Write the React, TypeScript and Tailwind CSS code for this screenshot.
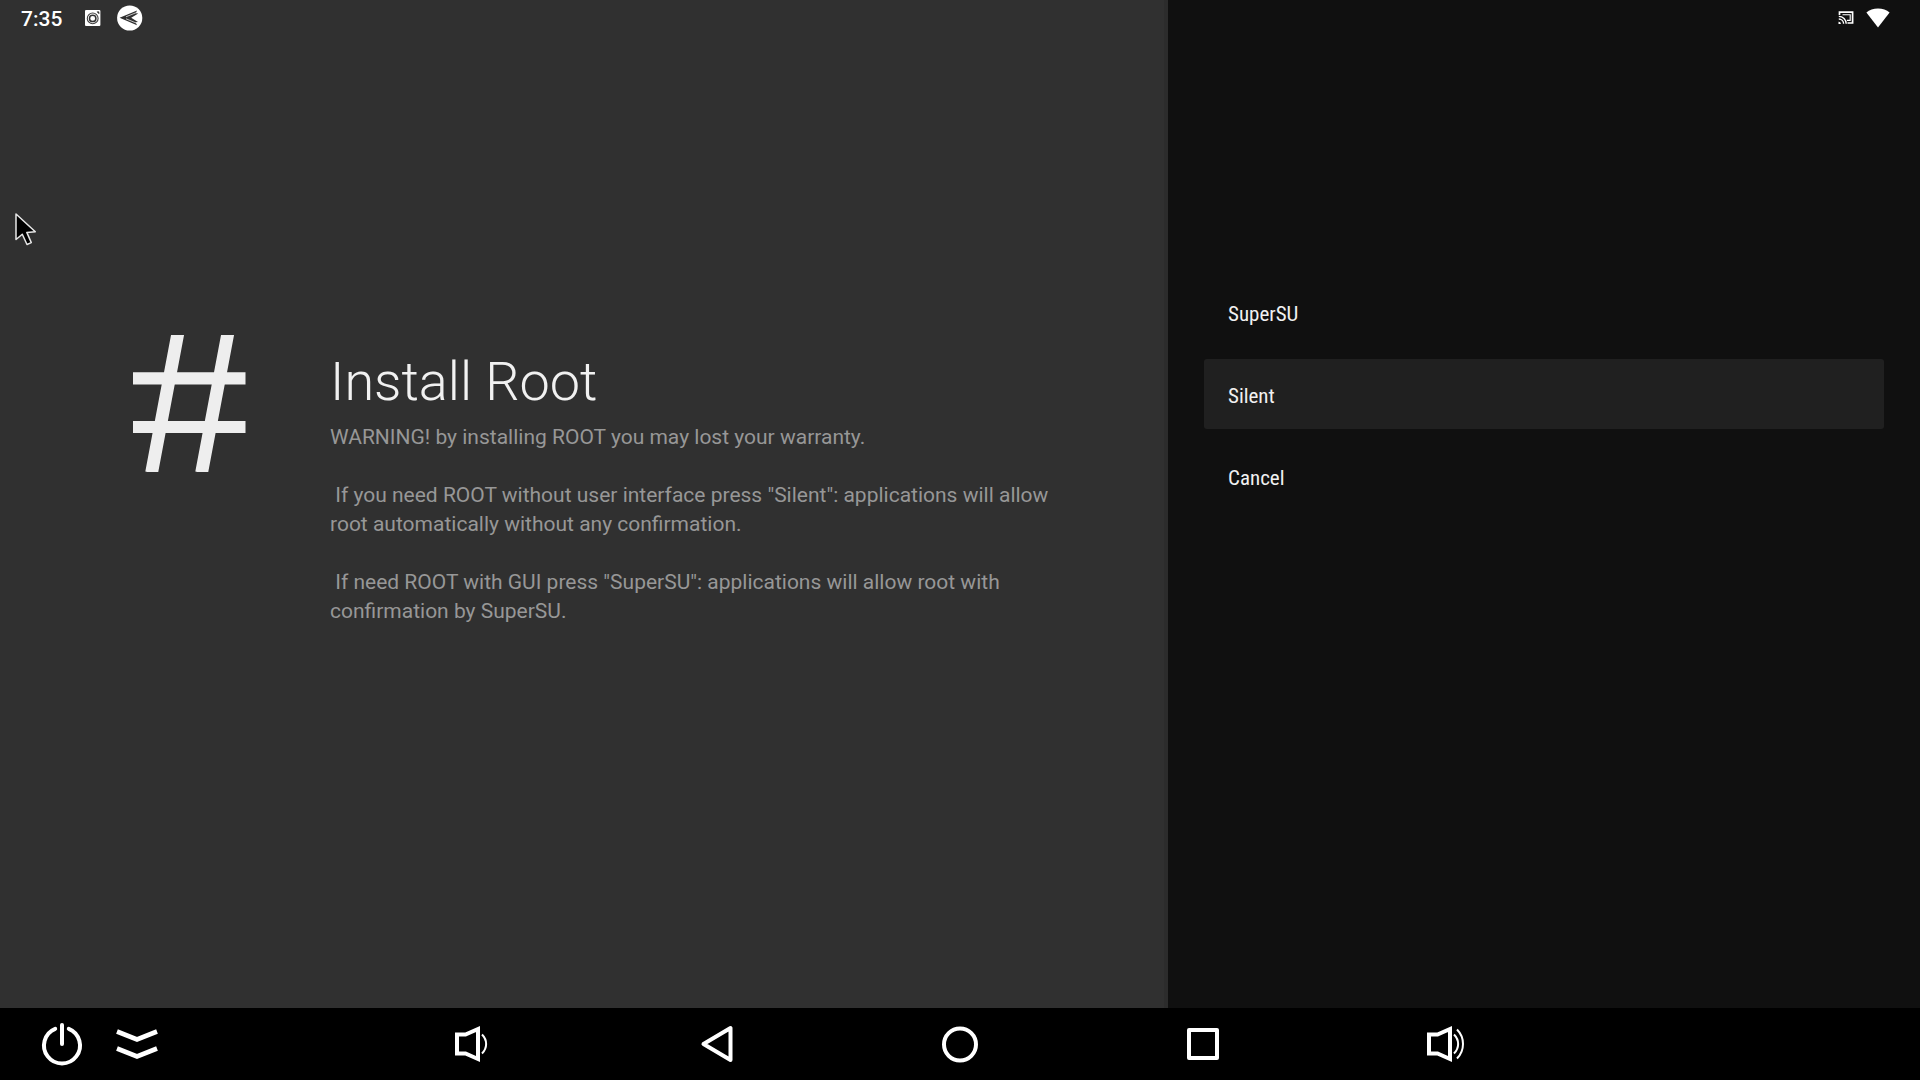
import type { ReactNode } from "react";

function HashIcon() {
  return (
    <svg className="mt-[299px] h-[137px] w-[113px] shrink-0" viewBox="0 0 113 137" stroke="#eeeeee" fill="none" aria-hidden="true">
      <path d="M0 43.3H112.5M0 92H112.5" strokeWidth="12.2" />
      <path d="M44.8 -1.4L18.6 137.8M94.8 -1.4L68.6 137.8" strokeWidth="12.8" />
    </svg>
  );
}

function CaptureIcon() {
  return (
    <svg className="h-4 w-4" viewBox="0 0 16 16" aria-label="Screenshot saved" role="img">
      <rect width="15.4" height="16" rx="1" fill="#fff" />
      <circle cx="7.7" cy="8.4" r="5.4" fill="none" stroke="#404040" strokeWidth="1.1" />
      <circle cx="7.7" cy="8.4" r="3.2" fill="none" stroke="#303030" strokeWidth="1.5" />
      <path d="M12 1.8h2v2z" fill="#303030" stroke="#303030" strokeWidth="0.6" />
    </svg>
  );
}

function LauncherIcon() {
  return (
    <svg className="h-[26px] w-[26px]" viewBox="0 0 26 26" aria-label="Launcher" role="img">
      <circle cx="12.7" cy="13" r="12.6" fill="#fff" />
      <path d="M2.6 12.8L20 5.6L18.8 8.2L21.2 8.4L14.2 12.8L21 17L18.6 17.2L20 20.2Z" fill="#303030" />
      <path d="M9 11.8L19.4 7.6M9 13.8L19.2 18" stroke="#fff" strokeWidth="0.7" />
    </svg>
  );
}

function CastIcon() {
  return (
    <svg className="h-[14px] w-4" viewBox="0 0 16 14" fill="none" stroke="#fff" aria-label="Casting" role="img">
      <path d="M1.5 4V1.2H14.6V12H9.5" strokeWidth="1.7" />
      <path d="M4.5 3.8H12.2V9.4H9" strokeWidth="1.1" />
      <path d="M0.8 5.4A7.4 7.4 0 0 1 8.2 12.8M0.8 8A4.8 4.8 0 0 1 5.6 12.8" strokeWidth="1.4" />
      <path d="M0.5 10.8A2 2 0 0 1 2.8 13H0.5Z" fill="#fff" stroke="none" />
    </svg>
  );
}

function WifiIcon() {
  return (
    <svg className="h-5 w-6" viewBox="0 0 24 20" aria-label="Wi-Fi connected" role="img">
      <path d="M12 19.5L0.4 4.6C3.4 2 7.4 0.5 12 0.5S20.6 2 23.6 4.6Z" fill="#fff" />
    </svg>
  );
}

function Cursor() {
  return (
    <svg className="absolute left-[14px] top-[211px] h-9 w-6" viewBox="0 0 24 36" aria-hidden="true">
      <path d="M2 3V28.5L8.3 23.2L13 33.5L17.3 31.6L12.8 21.4L21.3 20.8Z" fill="#000" stroke="#e8e8e8" strokeWidth="1.5" strokeLinejoin="round" />
    </svg>
  );
}

function NavButton({ label, children }: { label: string; children: ReactNode }) {
  return (
    <button type="button" aria-label={label} className="flex items-center justify-center">
      <svg className="h-12 w-12" viewBox="0 0 48 48" fill="none" stroke="#fff" strokeWidth="4" aria-hidden="true">
        {children}
      </svg>
    </button>
  );
}

const actions = [
  { label: "SuperSU", focused: false },
  { label: "Silent", focused: true },
  { label: "Cancel", focused: false },
];

export default function App() {
  return (
    <div className="relative flex min-h-screen flex-col bg-black font-['Roboto',sans-serif] text-white">
      <div className="grid flex-1 grid-cols-[1168fr_752fr]">
        <main className="flex flex-col border-r-4 border-[#2c2c2c] bg-[#303030]">
          <div className="flex h-9 items-center pl-[21px]">
            <time className="w-16 pt-0.5 text-[21px] leading-9 font-medium">7:35</time>
            <CaptureIcon />
            <span className="ml-4 flex">
              <LauncherIcon />
            </span>
          </div>
          <div className="flex pl-[133px]">
            <HashIcon />
            <section className="ml-[84px] mt-[313px] w-[740px]">
              <h1 className="text-[54px] leading-[66px] font-light text-[#f1f1f1]">Install Root</h1>
              <p className="mt-2 whitespace-pre-wrap text-[21px] leading-[29px] text-[#979797]">
                {"WARNING! by installing ROOT you may lost your warranty.\n\n If you need ROOT without user interface press \"Silent\": applications will allow root automatically without any confirmation.\n\n If need ROOT with GUI press \"SuperSU\": applications will allow root with confirmation by SuperSU."}
              </p>
            </section>
          </div>
        </main>

        <aside className="flex flex-col bg-[#101010]">
          <div className="flex h-9 items-center justify-end gap-3 pr-[30px]">
            <CastIcon />
            <WifiIcon />
          </div>
          <div className="mt-[241px] flex flex-col gap-3 px-9">
            {actions.map((a) => (
              <button
                key={a.label}
                type="button"
                className={`h-[70px] rounded-[3px] px-6 pt-[5px] text-left font-['Roboto_Condensed','Roboto',sans-serif] text-[21px] text-[#f1f1f1] ${
                  a.focused ? "bg-[#202020]" : ""
                }`}
              >
                {a.label}
              </button>
            ))}
          </div>
        </aside>
      </div>

      <nav className="grid h-[72px] grid-cols-[353fr_1214fr_353fr] bg-black">
        <div className="flex gap-[27px] pl-[38px]">
          <NavButton label="Power">
            <path d="M17.2 8.8A18 18 0 1 0 30.8 8.8" strokeLinecap="round" />
            <path d="M24 5V24" strokeLinecap="round" />
          </NavButton>
          <NavButton label="Hide bar">
            <path d="M4 11.5L24 19.5L44 11.5M4 28.5L24 36.5L44 28.5" strokeWidth="4.6" />
          </NavButton>
        </div>
        <div className="grid grid-cols-5">
          <NavButton label="Volume down">
            <path d="M7 14.5H15.5L28 9V39L15.5 33.5H7Z" />
            <path d="M32 14.5C37.5 20 37.5 28 32 33.5" strokeWidth="2" />
          </NavButton>
          <NavButton label="Back">
            <path d="M37.5 8V40L10.5 24Z" strokeLinejoin="round" />
          </NavButton>
          <NavButton label="Home">
            <circle cx="24" cy="24.5" r="16" />
          </NavButton>
          <NavButton label="Recent apps">
            <rect x="10" y="10" width="28" height="28" strokeLinejoin="round" />
          </NavButton>
          <NavButton label="Volume up">
            <path d="M7 14.5H15.5L28 9V39L15.5 33.5H7Z" />
            <path d="M32 14.5C37.5 20 37.5 28 32 33.5M35 9.5C43 17.5 43 30.5 35 38.5" strokeWidth="2" />
          </NavButton>
        </div>
      </nav>

      <Cursor />
    </div>
  );
}
